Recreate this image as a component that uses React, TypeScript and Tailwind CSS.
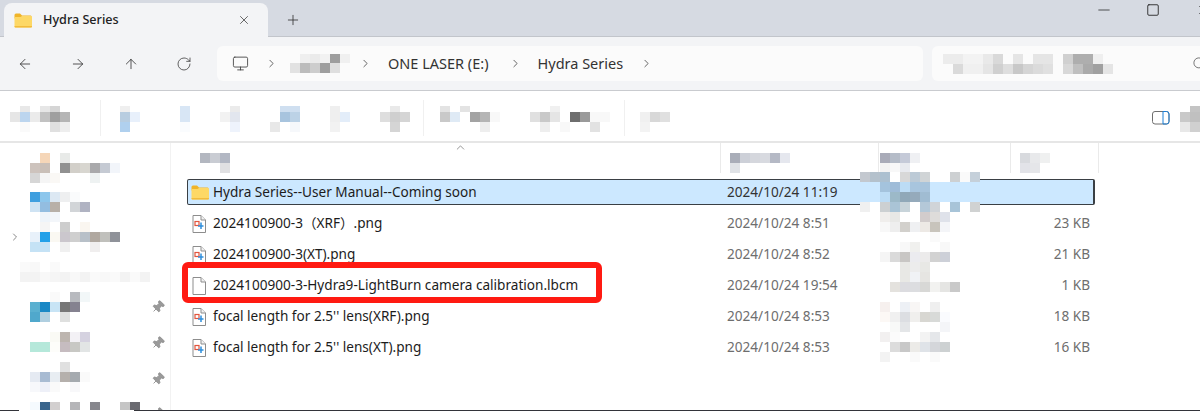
import { ArrowLeft, ArrowRight, ArrowUp, ChevronRight, ChevronUp, Minus, Monitor, Pin, Plus, RotateCw, Search, Square, X } from 'lucide-react';

// 가려진(모자이크) 영역: 색 토큰을 공백으로 구분, "-" 는 투명
function Mosaic({ rows, topH = 10, className = '' }: { rows: string[]; topH?: number; className?: string }) {
    return (
        <div className={`flex flex-col shrink-0 ${className}`}>
            {rows.map((row, i) => (
                <div key={i} className="flex" style={{ height: i === 0 ? topH : 10 }}>
                    {row.split(' ').map((c, j) => (
                        <div key={j} className="w-[10px] shrink-0" style={{ background: c === '-' ? undefined : `#${c}` }} />
                    ))}
                </div>
            ))}
        </div>
    );
}

function Folder({ className = '' }: { className?: string }) {
    return (
        <svg viewBox="0 0 18 15" className={`w-[18px] h-[15px] shrink-0 ${className}`}>
            <path d="M0.5 2 a1.5 1.5 0 0 1 1.5-1.5 h4 l2 2 h8.5 a1.2 1.2 0 0 1 1 1 v2 h-17 z" fill="#f0b429" />
            <path d="M0.5 4 h6 l1.5-1 h8.8 a1.2 1.2 0 0 1 1.2 1.2 v9.3 a1 1 0 0 1-1 1 h-15.5 a1 1 0 0 1-1-1 z" fill="#fdd866" />
            <path d="M0.5 13 h17.5 v0.6 a1 1 0 0 1-1 1 h-15.5 a1 1 0 0 1-1-1 z" fill="#f2bb3c" />
        </svg>
    );
}

function PngFile() {
    return (
        <svg viewBox="0 0 14 18" className="w-[14px] h-[18px] shrink-0">
            <path d="M1 0.5 h8 l4.5 4.5 v12.5 h-12.5 z" fill="#fff" stroke="#8d8d8d" />
            <path d="M9 0.5 v4.5 h4.5" fill="#f2f2f2" stroke="#8d8d8d" />
            <rect x="3" y="6.5" width="4" height="4" fill="none" stroke="#e2543c" strokeWidth="1.2" />
            <path d="M9 7.5 v6.5 M6 11 h5.5" stroke="#2f8fdc" strokeWidth="1.5" fill="none" />
        </svg>
    );
}

function BlankFile() {
    return (
        <svg viewBox="0 0 14 18" className="w-[14px] h-[18px] shrink-0">
            <path d="M1 0.5 h8 l4.5 4.5 v12.5 h-12.5 z" fill="#fff" stroke="#8d8d8d" />
            <path d="M9 0.5 v4.5 h4.5" fill="#f2f2f2" stroke="#8d8d8d" />
        </svg>
    );
}

function SmallPin({ className = '' }: { className?: string }) {
    return <Pin size={14} strokeWidth={1.5} className={`rotate-45 shrink-0 ml-auto mr-[5px] text-[#8f8f8f] fill-[#9a9a9a] ${className}`} />;
}

const files = [
    { name: '2024100900-3（XRF）.png', date: '2024/10/24 8:51', size: '23 KB', icon: 'png' },
    { name: '2024100900-3(XT).png', date: '2024/10/24 8:52', size: '21 KB', icon: 'png' },
    { name: '2024100900-3-Hydra9-LightBurn camera calibration.lbcm', date: '2024/10/24 19:54', size: '1 KB', icon: 'blank' },
    { name: "focal length for 2.5'' lens(XRF).png", date: '2024/10/24 8:53', size: '18 KB', icon: 'png' },
    { name: "focal length for 2.5'' lens(XT).png", date: '2024/10/24 8:53', size: '16 KB', icon: 'png' },
];

const typeColumn = [
    'c3c8cf b4c1cc acc0d0 ffffff d8d8d8 bccad6 d0d4d6 ffffff ffffff cdd0d2 fafafa c5d0da',
    '- - a4c3dd 9fbcd8 bcdcf5 a8c5de a8c4dc - - - - -',
    '- - bcdcf5 9cb9c8 90a8b8 95aabb a0bcd2 - - - - -',
    'f0f0f0 ffffff ccd0d2 aac4d6 c8d4da ffffff b4c8d8 d0d4d8 ffffff a8c4d8 ffffff d0d2d2',
    '- - f0eeec e8e8e6 - - d2cccc dedcda dfe2ea - - -',
    '- - f8f8f8 eeeeee d2d0cc eff0f2 ede9e5 c8c4bc f4f5f8 - - -',
    '- - - - - - - fafafa - - - -',
    '- - - - f8f8f8 f0f0ee - - f8f8f8 - - -',
    '- - f5f5f5 dadada c8c6c4 ebebef ecebeb d2d2d2 cdd0d8 - - -',
    '- - - - e8e8e5 ececec e8e8e5 - - - - -',
    '- - - - e8e8e5 f0f2f5 e6e5e2 - - - - -',
    '- - - e4e2de dcdce0 dcdde0 d8d8d6 f2f2f0 e5e5e3 c9c9c9 - -',
    '- - - - - - - - - - - -',
    '- - f6f0ee - edf0f5 f8f6f5 - efefef - - - -',
    '- - fcf8f5 f0f0f0 dcdee2 f0efed d8d7d2 d8dad8 fafbfe - - -',
    '- - - f8f9f8 e4e6e8 - - - f4f5f8 - - -',
    '- - f2f0f0 fbfbfb - - f3f3f3 e5e7ea - - - -',
    '- - - dcdcdc c8c8c8 ecebe8 dfe3e8 d4d6da cdd1d2 - - -',
    '- - f3f3f3 - - fafafa - fafafa - - - -',
];

export default function App() {
    return (
        <div className="relative flex flex-col w-[1200px] h-[411px] overflow-hidden bg-white text-[13.6px] text-[#1c1c1c] font-['Noto_Sans','Open_Sans','Noto_Sans_CJK_SC',sans-serif]">
            {/* 탭 바 */}
            <div className="flex h-[37px] shrink-0 pl-[4px] pt-[3px] bg-[#d6dae2] border-b border-[#c2c5cb]">
                <div className="flex items-center w-[264px] h-[34px] -mb-px rounded-t-lg bg-[#f3f4f6] pl-[10px] pr-[17px]">
                    <Folder />
                    <span className="ml-[11px] text-[12.6px] font-medium text-[#222]">Hydra Series</span>
                    <X size={14} strokeWidth={1.25} className="ml-auto text-[#333]" />
                </div>
                <Plus size={16} strokeWidth={1.25} className="ml-[17px] mt-[9px] text-[#333]" />
                <div className="flex items-start ml-auto -mr-[10px]">
                    <Minus size={18} strokeWidth={1} className="-mt-[2px] text-[#222]" />
                    <Square size={14} strokeWidth={1.5} className="ml-[33px] text-[#222]" />
                    <X size={14} strokeWidth={1.25} className="ml-[36px] text-[#222]" />
                </div>
            </div>

            {/* 주소 표시줄 */}
            <div className="flex items-center h-[54px] shrink-0 pl-[17px] bg-[#f3f4f6] border-b border-[#c9cbcf]">
                <div className="flex gap-[37px] text-[#333]">
                    <ArrowLeft size={16} strokeWidth={1.25} />
                    <ArrowRight size={16} strokeWidth={1.25} />
                    <ArrowUp size={16} strokeWidth={1.25} />
                    <RotateCw size={16} strokeWidth={1.25} className="text-[#444]" />
                </div>
                <div className="flex items-center ml-[25px] w-[706px] h-[35px] rounded-md bg-[#fbfbfb] pl-[15px] text-[14.5px] text-[#333]">
                    <Monitor size={17} strokeWidth={1.25} className="text-[#444]" />
                    <ChevronRight size={13} strokeWidth={1.5} className="ml-[16px] text-[#444]" />
                    <Mosaic topH={9} className="ml-[12px]" rows={['- efefef ebebeb f2f2f2 9e9e9e f0f0f0', 'e2e2e2 bcbcbc cdcdcd 9f9f9f dfdfdf fbfbfb']} />
                    <ChevronRight size={13} strokeWidth={1.5} className="ml-[9px] text-[#444]" />
                    <span className="ml-[16px]">ONE LASER (E:)</span>
                    <ChevronRight size={13} strokeWidth={1.5} className="ml-[20px] text-[#444]" />
                    <span className="ml-[16px]">Hydra Series</span>
                    <ChevronRight size={13} strokeWidth={1.5} className="ml-[17px] text-[#444]" />
                </div>
                <div className="flex items-center flex-1 ml-[9px] h-[35px] rounded-l-md bg-[#fbfbfb] pl-[11px]">
                    <Mosaic rows={[
                        'ececec ececec f3f3f3 f3f3f3 e9e9e9 d9d9d9 - e5e5e5 - e5e5e5 e5e5e5 - d0d0d0 aeaeae aeaeae efefef -',
                        '- dadada f0f0f0 f0f0f0 e5e5e5 d0d0d0 dedede c8c8c8 d5d5d5 dbdbdb e0e0e0 - d8d8d8 bfbfbf aaaaaa a0a0a0 e5e5e5',
                    ]} />
                    <Search size={15} strokeWidth={1.25} className="ml-auto -mr-[7px] text-[#555]" />
                </div>
            </div>

            {/* 명령 모음 */}
            <div className="flex items-start h-[52px] shrink-0 pt-[15px] border-b-2 border-[#e6e6e6]">
                <Mosaic topH={6} className="ml-[10px]" rows={['- e8e8e8 - e6e6e6 d5d5d5 -', 'e6e6e6 bcd5ee ebebeb c2c2c2 9f9f9f b5b5b5', '- fafafa - - e0e0e0 eeeeee']} />
                <div className="w-px h-[36px] -mt-[6px] ml-[30px] bg-[#f0f0f0]" />
                <Mosaic topH={6} className="ml-[19px]" rows={['efefef -', 'b8cde0 e8f0fb', 'b0d0ee -']} />
                <Mosaic topH={6} className="ml-[40px]" rows={['d8e6f5', 'd8e6f5', 'fafcfe']} />
                <Mosaic topH={6} className="ml-[30px]" rows={['- ebebeb', 'f2f2f2 e2e6ee', '- eef3fc']} />
                <Mosaic topH={6} className="ml-[30px]" rows={['- cfdff0 cfdff0', '- a8c4de bcd2e6', 'e8e8e8 - f6f8fb']} />
                <Mosaic topH={6} className="ml-[30px]" rows={['efefef -', 'efefef e3edf9', 'f2f2f2 -']} />
                <Mosaic topH={6} className="ml-[30px]" rows={['- e9e9e9 -', 'dedede cfcfcf d5d5d5', '- d5d5d5 -']} />
                <div className="w-px h-[36px] -mt-[6px] ml-[13px] bg-[#f0f0f0]" />
                <Mosaic topH={6} className="ml-[16px]" rows={['e3e3e3 - e3e3e3 - - -', 'c9c9c9 dfeaf5 - a3a3a3 b5b5b5 f8f8f8', '- - - - eeeeee -']} />
                <Mosaic topH={6} className="ml-[30px]" rows={['- - f0f0f0 - - - - -', 'e0e0e0 c9c9c9 e5e5e5 - 6e6e6e 9a9a9a f8f8f8 f8f8f8', '- eeeeee - f8f8f8 - - e2e2e2 -']} />
                <div className="w-px h-[36px] -mt-[6px] ml-[14px] bg-[#f0f0f0]" />
                <Mosaic topH={6} className="ml-[15px]" rows={['- - -', 'f0f0f0 d8d8d8 e0e0e0', 'f3f3f3 - -']} />
                <svg viewBox="0 0 18 14" className="w-[18px] h-[14px] ml-auto mt-[5px] shrink-0">
                    <rect x="0.5" y="0.5" width="16.5" height="12.5" rx="2.5" fill="none" stroke="#6f6f6f" />
                    <path d="M11 0.5 h3.5 a2.5 2.5 0 0 1 2.5 2.5 v7.5 a2.5 2.5 0 0 1-2.5 2.5 h-3.5 z" fill="none" stroke="#1b7fd6" />
                </svg>
                <Mosaic topH={6} className="ml-[10px]" rows={['- c4c4c4', 'c9c9c9 c0c0c0', 'e8e8e8 d0d0d0']} />
            </div>

            <div className="flex flex-1 min-h-0">
                {/* 사이드바 */}
                <aside className="flex flex-col w-[171px] shrink-0 overflow-hidden border-r border-[#f2f2f2] pt-[10px]">
                    <Mosaic className="ml-[30px]" rows={['- f5d6b8 - e8eae8 - - - - -', 'cdc3bd c9bfb8 - 919191 d2cfc9 d8d6d0 a9a9ab c5cad3 f2f5fa', 'd6d6d6 f5f5f5 faf8f5 - - - eef2f2 - -']} />
                    <Mosaic className="ml-[30px] mt-[9px]" rows={['3f9fdf 8cc6ec dce8f3 eeeff0 fafbfc - -', 'cfe3f3 93bde0 b8b0a8 - d2d5d8 b0b3c2 -', '- eef4fa f3f6fa - - - -']} />
                    <div className="flex items-center pl-[9px]">
                        <ChevronRight size={12} strokeWidth={1.75} className="text-[#777] shrink-0" />
                        <Mosaic className="ml-[9px]" rows={['- f5f5f5 - cdcdcd - faf6f0 - - -', 'e8f1fa 23a0e8 faf8f2 cbc7cd cfcfcf b8c0c8 b0a8a0 c0c0bc 8f9299', 'c5e2f5 c5e2f5 - f0f0f0 - - f0eeee - -']} />
                    </div>
                    <Mosaic className="ml-[20px] mt-[10px]" rows={['fafafa f8f8f8 - fafafa - - - - - - - - -', 'f3f3f3 f3f3f3 f8f8f8 f5f5f5 f3f3f3 f8f8f8 f3f3f3 fafafa f8f8f8 fafafa f3f3f3 fafafa f3f3f3']} />
                    <div className="flex items-center mt-[10px]">
                        <Mosaic className="ml-[30px]" rows={['- - fafafa - b8babf f2f7f8', '5ab0d0 1a88c5 c8e4f5 777777 858290 -', '50a8cc b0cfe0 - dfe0df - -']} />
                        <SmallPin />
                    </div>
                    <div className="flex items-center mt-[10px]">
                        <Mosaic className="ml-[30px]" rows={['- - fafaf5 bdb5af f3f1f5 d5d2e0', 'b5e8da b5e8da fdfdfa c6bcc0 c8c8c4 e2e5e5', '- - - - - -']} />
                        <SmallPin className="mb-[8px]" />
                    </div>
                    <div className="flex items-center">
                        <Mosaic className="ml-[30px]" rows={['- - - e0e0e0 - -', 'e5eaf2 a8bbd2 e8edf2 b5b0ac a5aaaf fafafa', 'f7f8fb eef0f8 fafafa - f8f8fa -']} />
                        <SmallPin className="mt-[4px]" />
                    </div>
                    <div className="flex items-start mt-[10px]">
                        <Mosaic className="ml-[30px]" rows={['f5fafe 3a658c d2cfcf - b5b5b8 - 87878d - - c5c5c5 6a6a70']} />
                        <SmallPin className="mt-[5px]" />
                    </div>
                </aside>

                {/* 파일 목록 */}
                <main className="relative flex-1 min-w-0">
                    <div className="flex h-[30px]">
                        <div className="relative w-[549px] pl-[29px] pt-[10px]">
                            <ChevronUp size={13} strokeWidth={1.25} className="absolute left-[283px] -top-[2px] text-[#666]" />
                            <Mosaic rows={['b3b7c0 c9ccd3 b2b7c3', '- - e0e0e2']} />
                        </div>
                        <div className="w-[158px] pl-[9px] pt-[10px] border-l border-[#eaeaea]">
                            <Mosaic rows={['a9adb8 cdd0d8 d5d7dd d8dae0 b5b9c5 e5e7ee', 'dfe2e6 - - - - -']} />
                        </div>
                        <div className="w-[132px] pl-[1px] pt-[10px] border-l border-[#eaeaea]">
                            <Mosaic rows={['a9abb8 b5bcc8 c5cad8 eff0f3', 'f3f3f3 f8f8f8 e8eaef -']} />
                        </div>
                        <div className="w-[89px] pl-[9px] pt-[10px] border-x border-[#eaeaea]">
                            <Mosaic rows={['d8dade e8e9eb eff0f0', 'e2e3e8 e5e6e9 -']} />
                        </div>
                    </div>

                    <ul className="flex flex-col pt-[4px] pl-[16px] pr-[105px]">
                        <li className="flex items-center h-[26px] mt-[2px] mb-[3px] rounded-[2px] bg-[#cce8ff] border border-[#3a3f44] border-r-2 pl-[3px]">
                            <Folder />
                            <span className="ml-[4px] w-[514px]">Hydra Series--User Manual--Coming soon</span>
                            <span className="text-[#333]">2024/10/24 11:19</span>
                        </li>
                        {files.map(file => (
                            <li key={file.name} className="flex items-center h-[31px] pl-[5px] pr-[5px]">
                                {file.icon === 'png' ? <PngFile /> : <BlankFile />}
                                <span className="ml-[7px] w-[514px] whitespace-pre">{file.name}</span>
                                <span className="text-[#6e6e6e]">{file.date}</span>
                                <span className="ml-auto text-[#6e6e6e]">{file.size}</span>
                            </li>
                        ))}
                    </ul>

                    {/* 유형 열 모자이크: 선택된 행 위에 겹침 */}
                    <Mosaic className="absolute left-[689px] top-[29px]" rows={typeColumn} />

                    {/* 빨간 강조 표시 */}
                    <div className="absolute left-[11px] top-[119px] w-[420px] h-[41px] rounded-[6px] border-[6px] border-[#ff1a12]" />
                </main>
            </div>

            {/* 아래쪽 창 경계선 */}
            <div className="flex h-px shrink-0 bg-[#33343a]">
                <div className="ml-[19px] w-[115px] bg-white" />
            </div>
        </div>
    );
}
